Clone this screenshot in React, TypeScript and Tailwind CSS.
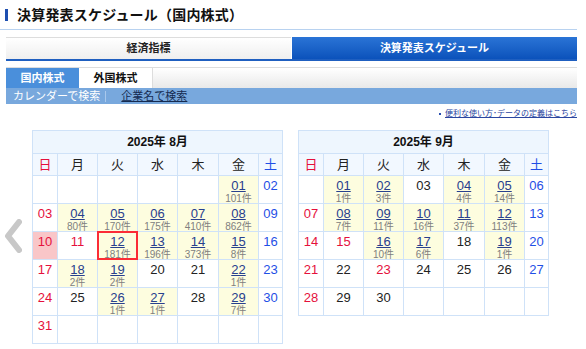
import React from "react";

type Cell = { d?: string; n?: string; c?: "sun" | "sat" | "hol" | "plain"; pink?: boolean; box?: boolean };

const aug: Cell[][] = [
  [{}, {}, {}, {}, {}, { d: "01", n: "101件" }, { d: "02", c: "sat" }],
  [{ d: "03", c: "sun" }, { d: "04", n: "80件" }, { d: "05", n: "170件" }, { d: "06", n: "175件" }, { d: "07", n: "410件" }, { d: "08", n: "862件" }, { d: "09", c: "sat" }],
  [{ d: "10", c: "sun", pink: true }, { d: "11", c: "hol" }, { d: "12", n: "181件", box: true }, { d: "13", n: "196件" }, { d: "14", n: "373件" }, { d: "15", n: "8件" }, { d: "16", c: "sat" }],
  [{ d: "17", c: "sun" }, { d: "18", n: "2件" }, { d: "19", n: "2件" }, { d: "20" }, { d: "21" }, { d: "22", n: "1件" }, { d: "23", c: "sat" }],
  [{ d: "24", c: "sun" }, { d: "25" }, { d: "26", n: "1件" }, { d: "27", n: "1件" }, { d: "28" }, { d: "29", n: "7件" }, { d: "30", c: "sat" }],
  [{ d: "31", c: "sun" }, {}, {}, {}, {}, {}, {}],
];

const sep: Cell[][] = [
  [{}, { d: "01", n: "1件" }, { d: "02", n: "3件" }, { d: "03" }, { d: "04", n: "4件" }, { d: "05", n: "14件" }, { d: "06", c: "sat" }],
  [{ d: "07", c: "sun" }, { d: "08", n: "7件" }, { d: "09", n: "11件" }, { d: "10", n: "16件" }, { d: "11", n: "37件" }, { d: "12", n: "113件" }, { d: "13", c: "sat" }],
  [{ d: "14", c: "sun" }, { d: "15", c: "hol" }, { d: "16", n: "10件" }, { d: "17", n: "6件" }, { d: "18" }, { d: "19", n: "1件" }, { d: "20", c: "sat" }],
  [{ d: "21", c: "sun" }, { d: "22" }, { d: "23", c: "hol" }, { d: "24" }, { d: "25" }, { d: "26" }, { d: "27", c: "sat" }],
  [{ d: "28", c: "sun" }, { d: "29" }, { d: "30" }, {}, {}, {}, {}],
];

const days = ["日", "月", "火", "水", "木", "金", "土"];

function DateCell({ cell }: { cell: Cell }) {
  const linked = !!cell.n;
  let bg = "bg-white";
  if (linked) bg = "bg-[#fdfddf]";
  if (cell.pink) bg = "bg-[#f9c6c8]";
  let color = "text-[#222222]";
  if (cell.c === "sun" || cell.c === "hol") color = "text-[#e5103c]";
  if (cell.c === "sat") color = "text-[#1f4fe6]";
  return (
    <div className={`relative h-[27px] ${bg} flex flex-col items-center`}>
      {cell.box && <div className="absolute inset-[-1px] z-10 border-2 border-red-500" />}
      {cell.d && (
        linked ? (
          <>
            <span className="text-[13px] leading-[15px] mt-[2px] text-[#28408e] underline underline-offset-[1px]">{cell.d}</span>
            <span className="text-[10px] leading-[11px] text-[#808080]">{cell.n}</span>
          </>
        ) : (
          <span className={`text-[13px] leading-[15px] mt-[2px] ${color}`}>{cell.d}</span>
        )
      )}
    </div>
  );
}

function Calendar({ title, rows }: { title: string; rows: Cell[][] }) {
  return (
    <div className="grid grid-cols-[24px_39px_39px_39px_40px_39px_23px] gap-px bg-[#cfe2f8] border border-[#cfe2f8] self-start">
      <div className="col-span-7 h-[22px] bg-[#eef6fe] flex items-center justify-center text-[12px] font-bold text-[#111]">{title}</div>
      {days.map((d, i) => (
        <div
          key={d}
          className={`h-[21px] bg-[#f2f8ff] flex items-center justify-center text-[13px] ${i === 0 ? "text-[#e5103c]" : i === 6 ? "text-[#1f4fe6]" : "text-[#222]"}`}
        >
          {d}
        </div>
      ))}
      {rows.flat().map((c, i) => (
        <DateCell key={i} cell={c} />
      ))}
    </div>
  );
}

export default function App() {
  return (
    <div
      className="relative w-[586px] h-[349px] bg-white overflow-hidden"
      style={{ fontFamily: '"Liberation Sans", "Noto Sans CJK JP", sans-serif' }}
    >
      {/* Title */}
      <div className="flex items-center h-[30px] pl-[5px] border-b border-[#b8d2f0] w-[577px]">
        <div className="w-[3px] h-[12px] bg-[#1e4fb0] mt-[1px]" />
        <div className="ml-[9px] text-[14px] font-bold text-[#111] tracking-[0.2px] mt-[1px]">決算発表スケジュール（国内株式）</div>
      </div>

      {/* Main tabs */}
      <div className="ml-[6px] w-[571px] mt-[7px] flex border-b-2 border-[#1f5fc0]">
        <div className="w-[285px] h-[22px] border-t border-[#dddddd] bg-gradient-to-b from-white to-[#efefef] flex items-center justify-center text-[11px] font-bold text-[#222]">
          経済指標
        </div>
        <div className="flex-1 ml-px h-[22px] bg-gradient-to-b from-[#2a74d6] to-[#0b52bb] flex items-center justify-center text-[11px] font-bold text-white">
          決算発表スケジュール
        </div>
      </div>

      {/* Sub tabs */}
      <div className="ml-[6px] w-[571px] mt-[6px] flex h-[21px] border-t border-[#dddddd]">
        <div className="w-[73px] bg-[#4a8fdb] flex items-center justify-center text-[11px] font-bold text-white">国内株式</div>
        <div className="w-[74px] bg-white border-r border-[#dddddd] flex items-center justify-center text-[11px] font-bold text-[#111]">外国株式</div>
        <div className="flex-1 bg-gradient-to-b from-white to-[#e9e9e9]" />
      </div>
      <div className="ml-[6px] w-[571px] h-[16px] bg-[#78a8dd] flex items-center text-[11px]">
        <span className="ml-[7px] text-white">カレンダーで検索</span>
        <span className="ml-[5px] w-px h-[11px] bg-[#a9c8ec]" />
        <span className="ml-[15px] text-[#142a50] underline">企業名で検索</span>
      </div>

      {/* Help link */}
      <div className="w-[577px] flex justify-end items-center mt-[5px] h-[10px]">
        <span className="w-[2px] h-[2px] bg-[#2a4fb0] mr-[4px]" />
        <span className="text-[8px] leading-[10px] text-[#2a45a0] underline">便利な使い方･データの定義はこちら</span>
      </div>

      {/* Calendars */}
      <div className="flex mt-[11px] ml-[32px] gap-[15px]">
        <Calendar title="2025年 8月" rows={aug} />
        <Calendar title="2025年 9月" rows={sep} />
      </div>

      {/* Left arrow */}
      <svg className="absolute left-[4px] top-[219px]" width="18" height="34" viewBox="0 0 18 34">
        <polyline points="15,3 4,17 15,31" fill="none" stroke="#c8c8c8" strokeWidth="6" strokeLinecap="round" strokeLinejoin="round" />
      </svg>
    </div>
  );
}
